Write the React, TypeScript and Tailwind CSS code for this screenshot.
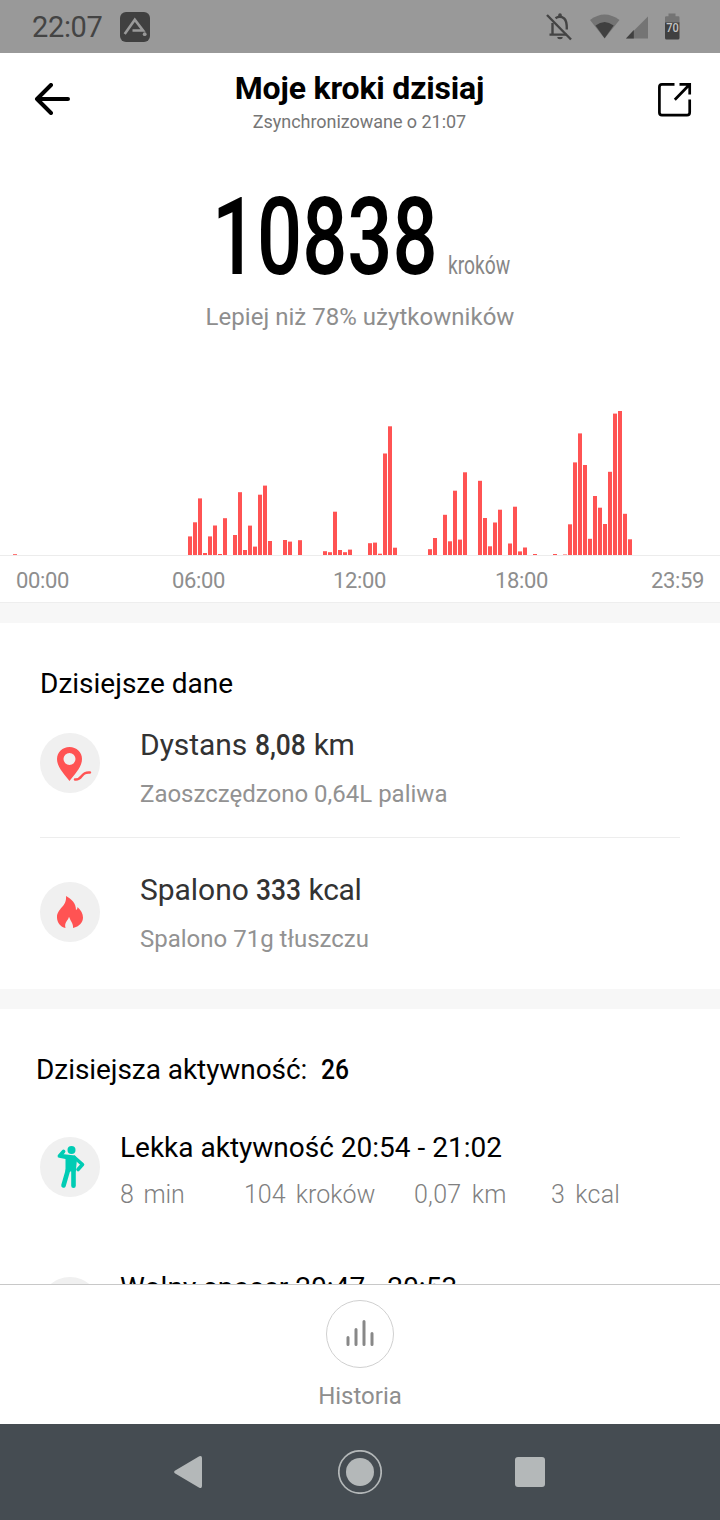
import type {ReactNode} from 'react';

// [x, height] of every five-pixel slot that has steps in it
const BARS: [number, number][] = [
  [13, 0.8], [188, 18.6], [193, 32.7], [198, 56.6], [203, 2], [208, 18.6], [213, 29.5],
  [218, 1], [223, 36.8], [233, 20], [238, 62.8], [243, 5], [248, 29.4], [253, 8.4],
  [258, 60.3], [263, 69.4], [268, 14], [283, 15], [288, 13.4], [298, 14.8], [323, 3.8],
  [328, 2.8], [333, 43.3], [338, 5], [343, 2.8], [348, 5.4], [368, 11.8], [373, 12.4],
  [378, 1.3], [383, 101.5], [388, 128.7], [393, 7.3], [428, 5.8], [433, 17], [443, 40.2],
  [448, 13.7], [453, 64.3], [458, 15.4], [463, 82.7], [478, 74.2], [483, 37], [488, 8.7],
  [493, 32.5], [498, 45.3], [508, 11.5], [513, 48.3], [518, 3.6], [523, 7.5], [533, 1],
  [553, 1], [563, 0.5], [568, 30.7], [573, 92.6], [578, 121.6], [583, 90], [588, 16.2],
  [593, 59], [598, 47.3], [603, 31], [608, 83.2], [613, 141.4], [618, 144], [623, 41.2],
  [628, 15.7],
];

const HOURS = ['00:00', '06:00', '12:00', '18:00', '23:59'];

function StatusBar() {
  return (
    <div className="flex h-[53px] flex-none items-center bg-[#999999] pl-8 text-[#444444]">
      <span className="w-[88px] text-[29px] leading-none tracking-[-0.35px] pt-0.5">22:07</span>
      <svg width="30" height="30" viewBox="0 0 30 30" className="mt-px" aria-hidden="true">
        <rect width="30" height="30" rx="6" fill="#404040" />
        <path d="M4.700 22 L14.800 7.800 L23 18.500 H12.500" fill="none" stroke="#999" strokeWidth="2.600" />
        <circle cx="24.700" cy="22.200" r="1.900" fill="#999" />
      </svg>
      <svg width="144" height="40" viewBox="0 0 144 40" className="ml-auto mr-8" aria-hidden="true">
        {/* muted bell */}
        <g fill="none" stroke="#444" strokeWidth="2.400">
          <path d="M3 8 L27 32.500" />
          <path d="M8.500 16 V28 M5.500 27.600 H22.500" />
          <path d="M11.500 11.200 Q16 8.200 20.200 11.500 Q23 14 22.800 22.500" />
        </g>
        <path d="M14.200 9 V8 a1.800 1.800 0 0 1 3.600 0 V9.500 Z M13.300 30 h5.400 a2.700 2.200 0 0 1 -5.400 0 Z" fill="#444" />
        {/* wifi */}
        <path d="M46 13 Q60.500 2 75.500 13 L60.600 31.500 Z" fill="#747474" />
        <path d="M51.500 18.500 Q60.600 11.500 69.700 18.500 L60.600 31.300 Z" fill="#404040" />
        {/* mobile signal */}
        <path d="M104 9.500 V31.500 H82 Z" fill="#747474" />
        <path d="M89.800 23 V31.500 H82 Z" fill="#404040" />
        {/* battery */}
        <path d="M124.500 6.500 h7 v2.700 h2.700 q1.300 0 1.300 1.300 V16 h-14.500 v-5.500 q0 -1.300 1.300 -1.300 h2.200 Z" fill="#747474" />
        <path d="M121 15.500 h14.500 V31 q0 1.500 -1.500 1.500 h-11.500 q-1.500 0 -1.500 -1.500 Z" fill="#404040" />
        <text x="122.300" y="24.500" fontSize="13" fontWeight="500" fill="#c4c4c4" textLength="12.500" lengthAdjust="spacingAndGlyphs">70</text>
      </svg>
    </div>
  );
}

function Header() {
  return (
    <header className="flex h-[99px] flex-none items-start justify-between pl-[34px] pr-[28px] pt-[19px]">
      <button type="button" aria-label="Wstecz" className="mt-[11px] w-9">
        <svg width="36" height="32" viewBox="0 0 36 32" fill="none" stroke="#000" strokeWidth="4" strokeLinecap="round" strokeLinejoin="round">
          <path d="M17 2 L3 16 L17 30 M3 16 H34" />
        </svg>
      </button>
      <div className="flex flex-col items-center">
        <h1 className="text-[32px] font-bold leading-8 tracking-[-0.18px]">Moje kroki dzisiaj</h1>
        <p className="mt-[9px] text-lg leading-[18px] tracking-[-0.04px] text-[#767676]">Zsynchronizowane o 21:07</p>
      </div>
      <button type="button" aria-label="Udostępnij" className="mt-[10px] flex w-[43px] justify-end">
        <svg width="36" height="36" viewBox="0 0 36 36" fill="none" stroke="#000" strokeWidth="2.700">
          <path d="M18.500 2.400 H6 Q3.400 2.400 3.400 5 V30.500 Q3.400 33.200 6 33.200 H31 Q33.700 33.200 33.700 30.500 V17.500" />
          <path d="M23.500 2.400 H33.700 V12.500 M33.300 2.800 L18.800 17.800" />
        </svg>
      </button>
    </header>
  );
}

function StepsChart() {
  return (
    <section className="flex-none">
      <svg width="720" height="160" viewBox="0 0 720 160" className="block" aria-hidden="true">
        {BARS.map(([x, h]) => (
          <rect key={x} x={x} y={159 - h} width="4" height={h} fill="#ff5353" />
        ))}
        <rect y="159" width="720" height="1" fill="#ececec" />
      </svg>
      <div className="grid h-[46px] grid-cols-[156px_161px_162px_156px_auto] px-4 pt-[14px] text-[22px] leading-[22px] tracking-[-0.35px] text-[#8e8e8e]">
        {HOURS.map((hour) => (
          <span key={hour}>{hour}</span>
        ))}
      </div>
      <div className="h-[21px] border-t border-[#eeeeee] bg-[#f7f7f7]" />
    </section>
  );
}

function IconCircle({children}: {children?: ReactNode}) {
  return (
    <div className="h-[60px] w-[60px] flex-none overflow-hidden rounded-full bg-[#f0f0f0]">
      <svg width="60" height="60" viewBox="0 0 60 60" aria-hidden="true">
        {children}
      </svg>
    </div>
  );
}

interface MetricProps {
  icon: ReactNode;
  label: string;
  value: string;
  unit: string;
  note: string;
}

function Metric({icon, label, value, unit, note}: MetricProps) {
  return (
    <div className="flex gap-10">
      {icon}
      <div className="text-[#333333]">
        <p className="text-[30px] leading-[30px] tracking-[-0.05px]">
          {label} <span className="-mr-[6px] inline-block origin-left scale-x-[0.88] font-medium">{value}</span>{' '}
          <span className="tracking-[-0.300px]">{unit}</span>
        </p>
        <p className="mt-[22px] text-2xl leading-6 text-[#929292]">{note}</p>
      </div>
    </div>
  );
}

function NavBar() {
  return (
    <nav className="flex h-24 flex-none items-center justify-between bg-[#454c52] pl-[173px] pr-[175px]">
      <svg width="30" height="36" viewBox="0 0 30 36" fill="#b4b8b9" aria-hidden="true">
        <path d="M1.800 16.800 L26.300 2.300 Q29 1.200 29 4 V32 Q29 34.800 26.300 33.700 L1.800 19.200 Q0.200 18 1.800 16.800 Z" />
      </svg>
      <svg width="44" height="44" viewBox="0 0 44 44" className="ml-px" aria-hidden="true">
        <circle cx="22" cy="22" r="21.200" fill="none" stroke="#b4b8b9" strokeWidth="1.700" />
        <circle cx="22" cy="22" r="14" fill="#b4b8b9" />
      </svg>
      <div className="h-[30px] w-[30px] rounded-[3px] bg-[#b4b8b9]" />
    </nav>
  );
}

export default function App() {
  return (
    <div className="flex h-[1520px] w-[720px] flex-col overflow-hidden bg-white font-['Roboto',sans-serif] text-black">
      <StatusBar />
      <Header />

      <section className="flex h-[244px] flex-none flex-col items-center pt-[30px]">
        <div className="flex h-[110px] w-[296px] items-end">
          <span className="w-[236px] origin-left scale-x-[0.735] whitespace-nowrap text-[108px] font-medium leading-[110px]">10838</span>
          <span className="mb-[14px] w-[60px] origin-left scale-x-[0.740] text-[26px] leading-[26px] text-[#868686]">kroków</span>
        </div>
        <p className="mt-[13px] text-2xl leading-6 tracking-[0.03px] text-[#8e8e8e]">Lepiej niż 78% użytkowników</p>
      </section>

      <StepsChart />

      <section className="h-[366px] flex-none px-10 pt-[47px]">
        <h2 className="text-[28px] leading-7">Dzisiejsze dane</h2>
        <div className="mt-8 h-[108px] border-b border-[#ededed]">
          <Metric
            icon={
              <div className="pt-[3px]">
                <IconCircle>
                  <path fillRule="evenodd" d="M29.500 14 C22.500 14 17 19.300 17 26 C17 34.500 24.500 41 29.500 48 C34.500 41 42 34.500 42 26 C42 19.300 36.500 14 29.500 14 Z M29.500 20 a6 6 0 1 1 0 12 a6 6 0 1 1 0 -12 Z" fill="#ff5353" />
                  <path d="M35 46.500 C43 47.500 40 38.500 50 39.500" fill="none" stroke="#ff5353" strokeWidth="2.500" strokeLinecap="round" />
                </IconCircle>
              </div>
            }
            label="Dystans"
            value="8,08"
            unit="km"
            note="Zaoszczędzono 0,64L paliwa"
          />
        </div>
        <div className="pt-[37px]">
          <Metric
            icon={
              <div className="pt-[7px]">
                <IconCircle>
                  <path d="M26 14 C31.500 17 36 21 36 28 C37 27.500 37.500 26.500 37.500 25 C41 28 43 32 43 35.500 C43 40.500 39.500 44.500 33 46 C33.500 42 31 40 29 34.800 C28 39 24 40 25.500 46 C20.500 45 17 40.500 17 35.500 C17 26 27 25 26 14 Z" fill="#ff5353" />
                </IconCircle>
              </div>
            }
            label="Spalono"
            value="333"
            unit="kcal"
            note="Spalono 71g tłuszczu"
          />
        </div>
      </section>
      <div className="h-5 flex-none bg-[#f7f7f7]" />

      <section className="h-[275px] flex-none overflow-hidden">
        <h2 className="pl-9 pt-[47px] text-[28px] leading-7 tracking-[-0.06px]">
          Dzisiejsza aktywność: <span className="ml-[7px] inline-block origin-left scale-x-[0.88] font-medium">26</span>
        </h2>
        <div className="mt-[53px] flex h-[140px] gap-5 pl-10">
          <IconCircle>
            <circle cx="31.500" cy="13" r="4" fill="#00ccb4" />
            <path d="M22 17 L35 18.500 L37 22 L35.800 34.500 H25.500 L25.500 22 Z" fill="#00ccb4" />
            <g fill="none" stroke="#00ccb4" strokeLinecap="round" strokeLinejoin="round">
              <path d="M27 20.500 L19.500 19 L23.500 14.500" strokeWidth="3.800" />
              <path d="M34.500 20.500 L42.500 27.500 L38 32.500" strokeWidth="3.600" />
              <path d="M28 33 L23.500 48.500 M33.500 32 V48.800" strokeWidth="4.600" />
            </g>
          </IconCircle>
          <div>
            <p className="-mt-[3px] text-[28px] leading-7">Lekka aktywność 20:54 - 21:02</p>
            <div className="mt-5 flex text-[25px] font-light leading-[26px] text-[#808080] [word-spacing:4px]">
              <span className="w-[124px] tracking-[-0.2px]">8 min</span>
              <span className="w-[170px]">104 kroków</span>
              <span className="w-[137px] tracking-[0.25px]">0,07 km</span>
              <span className="tracking-[0.2px]">3 kcal</span>
            </div>
          </div>
        </div>
        <div className="flex gap-5 pl-10">
          <IconCircle />
          <p className="-mt-[3px] text-[28px] leading-7 tracking-[0.08px]">Wolny spacer 20:47 - 20:53</p>
        </div>
      </section>

      <footer className="flex h-[140px] flex-none flex-col items-center border-t border-[#c8c8c8] pt-[15px]">
        <button type="button" className="flex flex-col items-center">
          <svg width="68" height="68" viewBox="0 0 68 68" fill="none" aria-hidden="true">
            <circle cx="34" cy="34" r="33.500" stroke="#d0d0d0" />
            <path d="M22 37.500 V44.500 M30 29.500 V44.500 M38 21.500 V44.500 M46 33.500 V44.500" stroke="#888" strokeWidth="3" strokeLinecap="round" />
          </svg>
          <span className="mt-4 text-2xl leading-6 text-[#8e8e8e]">Historia</span>
        </button>
      </footer>

      <NavBar />
    </div>
  );
}
